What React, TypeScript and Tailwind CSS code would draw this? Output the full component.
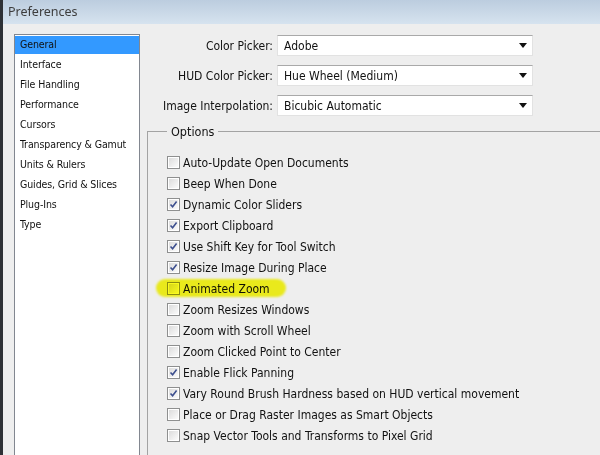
import React from 'react';

const categories = [
  'General',
  'Interface',
  'File Handling',
  'Performance',
  'Cursors',
  'Transparency & Gamut',
  'Units & Rulers',
  'Guides, Grid & Slices',
  'Plug-Ins',
  'Type',
];

const pickers = [
  { label: 'Color Picker:', value: 'Adobe' },
  { label: 'HUD Color Picker:', value: 'Hue Wheel (Medium)' },
  { label: 'Image Interpolation:', value: 'Bicubic Automatic' },
];

const options = [
  { label: 'Auto-Update Open Documents', checked: false },
  { label: 'Beep When Done', checked: false },
  { label: 'Dynamic Color Sliders', checked: true },
  { label: 'Export Clipboard', checked: true },
  { label: 'Use Shift Key for Tool Switch', checked: true },
  { label: 'Resize Image During Place', checked: true },
  { label: 'Animated Zoom', checked: false, marked: true },
  { label: 'Zoom Resizes Windows', checked: false },
  { label: 'Zoom with Scroll Wheel', checked: false },
  { label: 'Zoom Clicked Point to Center', checked: false },
  { label: 'Enable Flick Panning', checked: true },
  { label: 'Vary Round Brush Hardness based on HUD vertical movement', checked: true },
  { label: 'Place or Drag Raster Images as Smart Objects', checked: false },
  { label: 'Snap Vector Tools and Transforms to Pixel Grid', checked: false },
];

function CheckBox({ checked }: { checked: boolean }) {
  return (
    <span className="w-[13px] h-[13px] shrink-0 border border-[#8e8f8f] bg-white p-[1px]">
      <span className="relative block w-full h-full bg-gradient-to-br from-[#dcdcdc] to-[#fbfbfb]">
        {checked && (
          <svg viewBox="0 0 9 9" className="absolute inset-0 w-full h-full">
            <path d="M1.5 4.5 L3.6 6.8 L7.6 1.6" fill="none" stroke="#3d4f8e" strokeWidth="1.6" />
          </svg>
        )}
      </span>
    </span>
  );
}

function Select({ value }: { value: string }) {
  return (
    <div className="w-[256px] h-[21px] flex items-center justify-between bg-white border border-[#e2e2e2] border-t-[#a9a9a9] pl-[6px] pr-[5px] text-[12px] text-[#111]">
      <span>{value}</span>
      <svg width="8" height="5" viewBox="0 0 8 5">
        <path d="M0 0 H8 L4 5 Z" fill="#111" />
      </svg>
    </div>
  );
}

export default function App() {
  return (
    <div className="w-[600px] h-[455px] overflow-hidden flex bg-[#2b2b2b] font-['DejaVu_Sans_Condensed','DejaVu_Sans',sans-serif] [font-stretch:semi-condensed]">
      <div className="w-[3px] shrink-0 bg-[#2e3136]" />
      <div className="flex-1 flex flex-col bg-[#eeeeee]">
        <div className="h-[24px] shrink-0 flex items-center pl-[5px] bg-gradient-to-b from-[#bccddf] to-[#d6e3ef] font-['Noto_Sans',sans-serif] [font-stretch:normal] text-[12.5px] text-[#3d3d3d]">
          Preferences
        </div>
        <div className="flex-1 flex pl-[11px] pt-[10px]">
          <div className="w-[126px] h-[440px] shrink-0 border border-[#828790] bg-white pt-[1px] text-[10.5px] tracking-[-0.1px] text-[#111] whitespace-nowrap">
            {categories.map((c, i) => (
              <div key={c} className="h-[20px]">
                <div className={`h-[18px] flex items-center pl-[5px] ${i === 0 ? 'bg-[#3399ff]' : ''}`}>{c}</div>
              </div>
            ))}
          </div>
          <div className="flex-1 flex flex-col">
            <div className="flex flex-col gap-[9px] pt-[1px]">
              {pickers.map((p) => (
                <div key={p.label} className="flex items-center">
                  <span className="w-[134px] text-right pr-[1px] text-[12px] text-[#111]">{p.label}</span>
                  <span className="w-[3px]" />
                  <Select value={p.value} />
                </div>
              ))}
            </div>
            <div className="relative mt-[15px] ml-[7px] flex-1 border-l border-t border-[#a3a3a3]">
              <span className="absolute -top-[9px] left-[19px] px-[4px] bg-[#eeeeee] text-[12.5px] text-[#111]">Options</span>
              <div className="flex flex-col pt-[20px] pl-[19px] text-[12px] text-[#111] whitespace-nowrap">
                {options.map((o) => (
                  <div key={o.label} className="relative h-[21px] flex items-center gap-[3px]">
                    <CheckBox checked={o.checked} />
                    <span>{o.label}</span>
                    {o.marked && (
                      <span className="absolute -left-[11px] top-[1px] w-[130px] h-[18px] rounded-[9px] bg-[#fafa1e] mix-blend-multiply blur-[1px]" />
                    )}
                  </div>
                ))}
              </div>
            </div>
          </div>
        </div>
      </div>
    </div>
  );
}
